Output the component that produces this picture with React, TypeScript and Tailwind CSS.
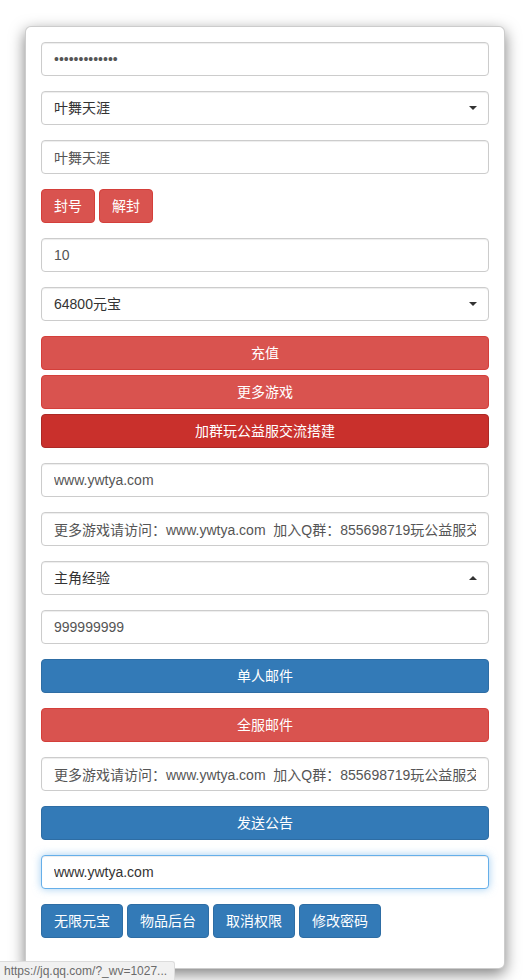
import React from "react";

const font = { fontFamily: '"Liberation Sans", "Noto Sans CJK SC", Arial, sans-serif' };

const inputCls =
  "block w-full h-[34px] px-[12px] py-[6px] text-[14px] text-[#555] bg-white border border-[#ccc] rounded-[4px] shadow-[inset_0_1px_1px_rgba(0,0,0,0.075)] outline-none";

function Input({ value, type = "text", focused = false }: { value: string; type?: string; focused?: boolean }) {
  return (
    <input
      readOnly
      type={type}
      defaultValue={value}
      className={
        focused
          ? "block w-full h-[34px] px-[12px] py-[6px] text-[14px] text-[#333] bg-white border border-[#66afe9] rounded-[4px] shadow-[inset_0_1px_1px_rgba(0,0,0,0.075),0_0_8px_rgba(102,175,233,0.6)] outline-none"
          : inputCls
      }
      style={font}
    />
  );
}

function Select({ value, up = false }: { value: string; up?: boolean }) {
  return (
    <div className="flex items-center justify-between w-full h-[34px] pl-[12px] pr-[11px] text-[14px] text-[#333] bg-white border border-[#ccc] rounded-[4px] shadow-[inset_0_1px_1px_rgba(0,0,0,0.075)]">
      <span>{value}</span>
      {up ? (
        <span className="w-0 h-0 border-l-[4px] border-r-[4px] border-b-[4px] border-l-transparent border-r-transparent border-b-[#333]" />
      ) : (
        <span className="w-0 h-0 border-l-[4px] border-r-[4px] border-t-[4px] border-l-transparent border-r-transparent border-t-[#333]" />
      )}
    </div>
  );
}

const danger = "bg-[#d9534f] border-[#d43f3a]";
const dangerDark = "bg-[#c9302c] border-[#ac2925]";
const primary = "bg-[#337ab7] border-[#2e6da4]";

function Btn({ label, color, block = false }: { label: string; color: string; block?: boolean }) {
  return (
    <div
      className={
        (block ? "flex w-full justify-center " : "inline-flex justify-center px-[12px] ") +
        "items-center h-[34px] text-[14px] text-white border rounded-[4px] " +
        color
      }
    >
      {label}
    </div>
  );
}

export default function App() {
  const longText = "更多游戏请访问：www.ywtya.com  加入Q群：855698719玩公益服交流搭建";
  return (
    <div className="relative min-h-[980px] bg-white" style={font}>
      <div className="pt-[26px] pl-[25px]">
        <div className="w-[480px] bg-white border border-[rgba(0,0,0,0.2)] rounded-[6px] shadow-[0_5px_15px_rgba(0,0,0,0.5)] p-[15px]">
          <div className="flex flex-col">
            <div className="mb-[15px]"><Input type="password" value="1234567890123" /></div>
            <div className="mb-[15px]"><Select value="叶舞天涯" /></div>
            <div className="mb-[15px]"><Input value="叶舞天涯" /></div>
            <div className="mb-[15px] flex gap-[4px]">
              <Btn label="封号" color={danger} />
              <Btn label="解封" color={danger} />
            </div>
            <div className="mb-[15px]"><Input value="10" /></div>
            <div className="mb-[15px]"><Select value="64800元宝" /></div>
            <div className="mb-[5px]"><Btn block label="充值" color={danger} /></div>
            <div className="mb-[5px]"><Btn block label="更多游戏" color={danger} /></div>
            <div className="mb-[15px]"><Btn block label="加群玩公益服交流搭建" color={dangerDark} /></div>
            <div className="mb-[15px]"><Input value="www.ywtya.com" /></div>
            <div className="mb-[15px]"><Input value={longText} /></div>
            <div className="mb-[15px]"><Select value="主角经验" up /></div>
            <div className="mb-[15px]"><Input value="999999999" /></div>
            <div className="mb-[15px]"><Btn block label="单人邮件" color={primary} /></div>
            <div className="mb-[15px]"><Btn block label="全服邮件" color={danger} /></div>
            <div className="mb-[15px]"><Input value={longText} /></div>
            <div className="mb-[15px]"><Btn block label="发送公告" color={primary} /></div>
            <div className="mb-[15px]"><Input value="www.ywtya.com" focused /></div>
            <div className="mb-[15px] flex gap-[4px]">
              <Btn label="无限元宝" color={primary} />
              <Btn label="物品后台" color={primary} />
              <Btn label="取消权限" color={primary} />
              <Btn label="修改密码" color={primary} />
            </div>
          </div>
        </div>
      </div>
      <div className="absolute left-0 top-[961px] h-[19px] w-[175px] flex items-center pl-[4px] bg-[#f1f1f1] border-t border-r border-[#dcdcdc] rounded-tr-[3px] text-[12px] text-[#6b6b6b] overflow-hidden whitespace-nowrap">
        https://jq.qq.com/?_wv=1027...
      </div>
    </div>
  );
}
